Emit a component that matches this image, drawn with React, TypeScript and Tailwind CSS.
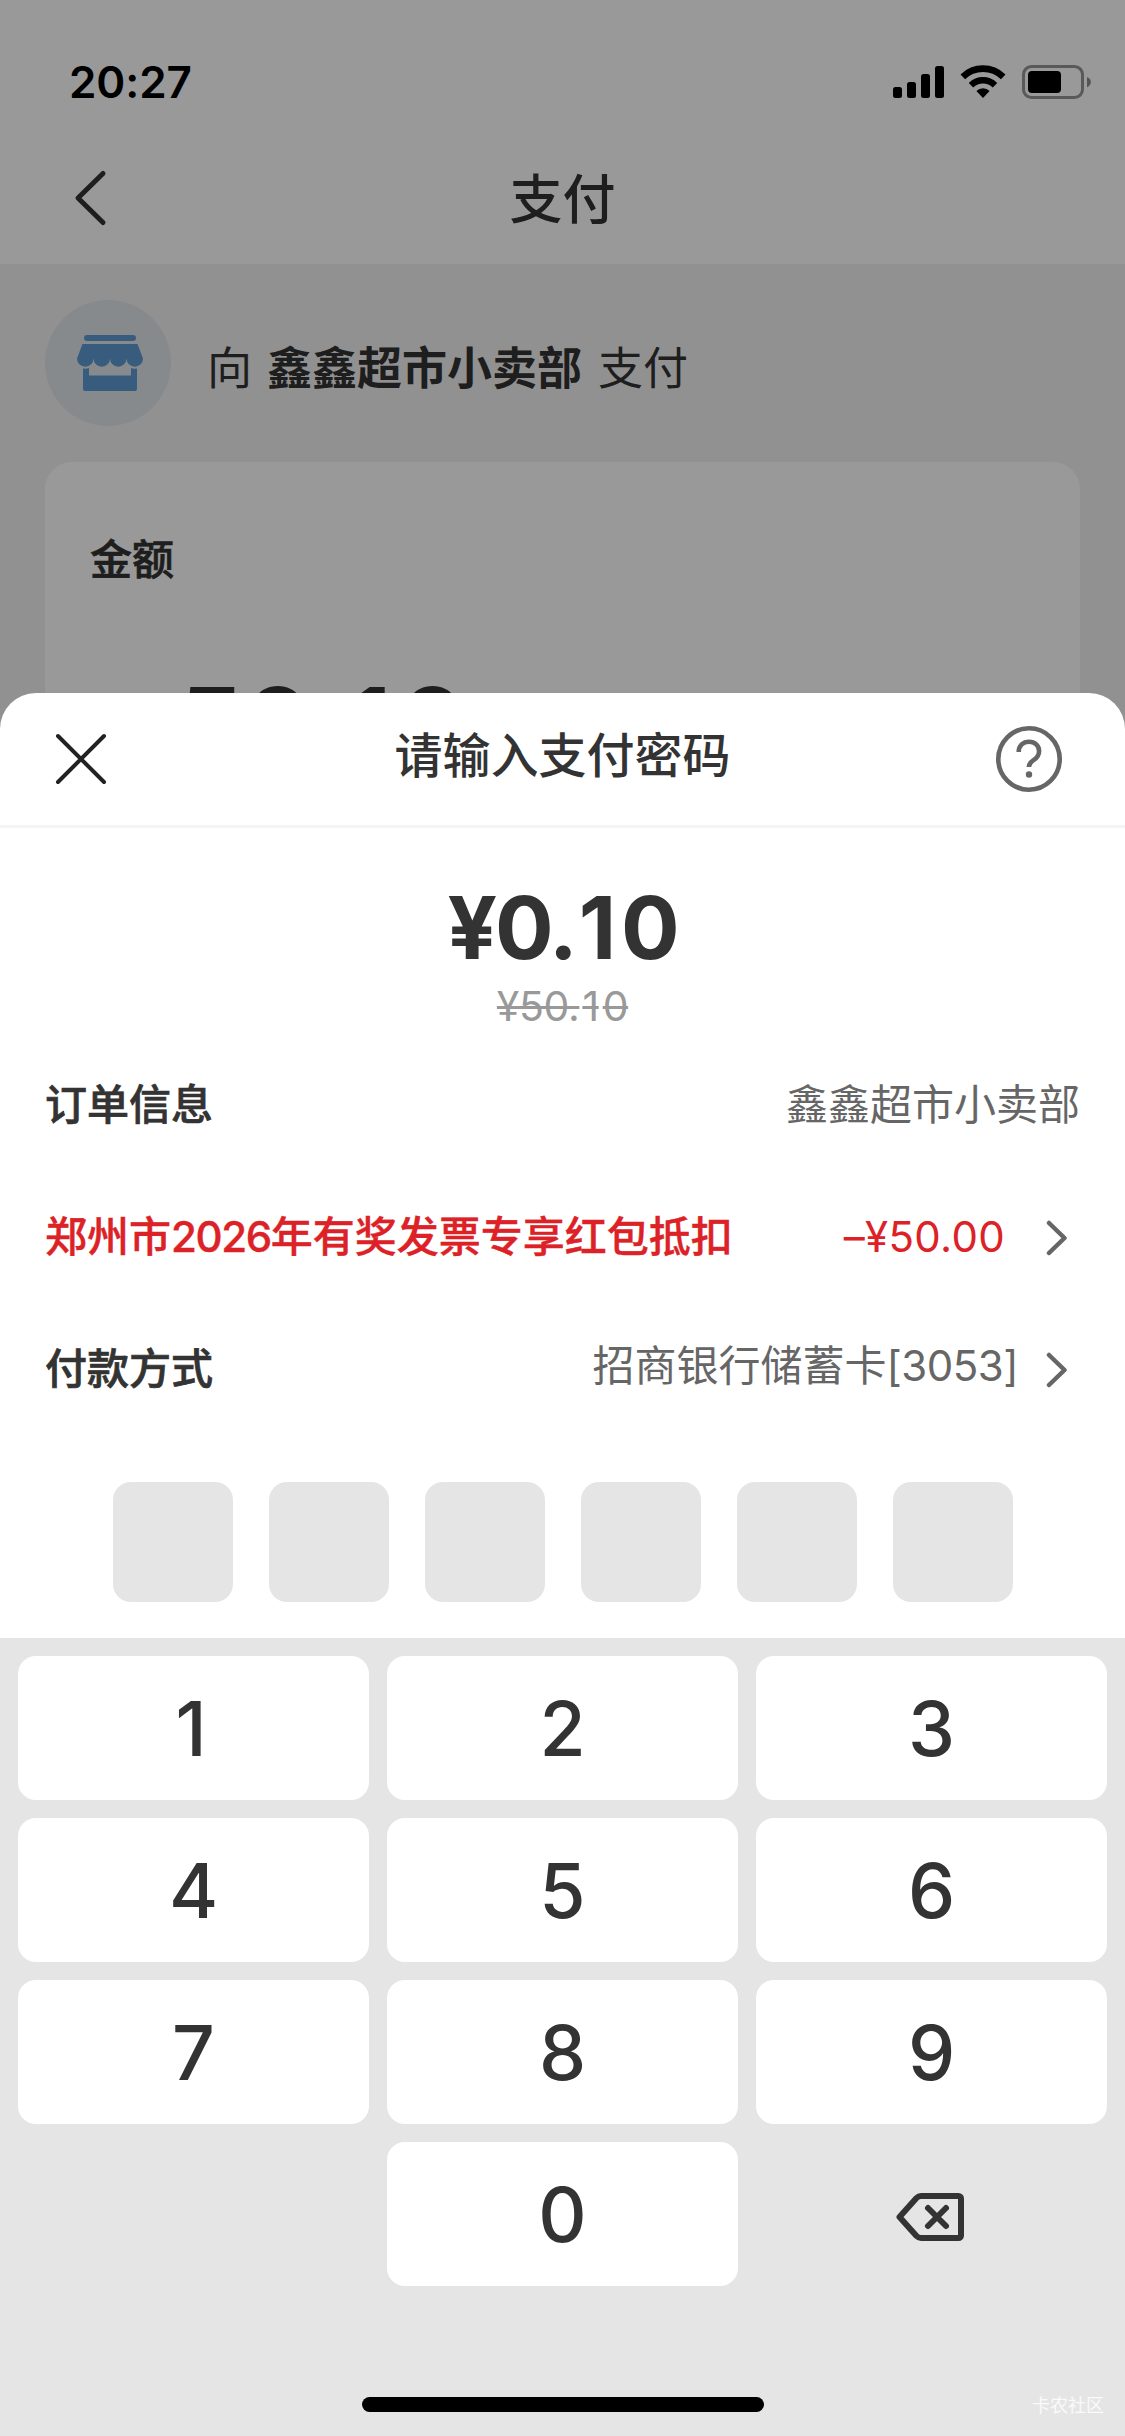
import { useState } from "react";

const KEYS = ["1", "2", "3", "4", "5", "6", "7", "8", "9"];
const PIN_LENGTH = 6;

function StatusBar() {
  return (
    <div className="flex h-[132px] items-start justify-between pt-[61px] pr-[33px] pl-[69px]">
      <span className="text-[44px] leading-[42px] font-semibold tracking-[-0.1px] text-black">20:27</span>
      <div className="flex pt-1 text-black">
        <svg width="51" height="34" viewBox="0 0 51 34" fill="currentColor">
          <rect x="0" y="22" width="9" height="11" rx="2.5" />
          <rect x="14" y="17" width="9" height="16" rx="2.5" />
          <rect x="28" y="9" width="9" height="24" rx="2.5" />
          <rect x="42" y="1" width="9" height="32" rx="2.5" />
        </svg>
        <svg className="ml-4" width="46" height="34" viewBox="0 0 46 34" fill="none" stroke="currentColor">
          <path d="M2.8 11.8a29 29 0 0 1 40.4 0" strokeWidth="6.6" />
          <path d="M11 20.2a17.2 17.2 0 0 1 24 0" strokeWidth="6.4" />
          <path d="M16.4 25.9a9.6 9.6 0 0 1 13.2 0L23 33z" fill="currentColor" stroke="none" />
        </svg>
        <svg className="ml-4" width="70" height="34" viewBox="0 0 70 34" fill="none">
          <rect x="1.5" y="1.5" width="59" height="31" rx="8" stroke="#000" strokeOpacity="0.42" strokeWidth="3" />
          <rect x="6" y="6" width="33" height="22" rx="4" fill="#000" />
          <path d="M65 12c5.200 1.800 5.200 8.400 0 10.200z" fill="#000" fillOpacity="0.45" />
        </svg>
      </div>
    </div>
  );
}

function ShopIcon() {
  return (
    <svg width="66" height="56" viewBox="0 0 66 56" fill="#5d99d2">
      <rect x="7" y="0" width="52" height="6" rx="3" />
      <path d="M5.500 9h55L66 23.500a8.250 8.250 0 0 1-16.500 0 8.250 8.250 0 0 1-16.500 0 8.250 8.250 0 0 1-16.500 0A8.250 8.250 0 0 1 0 23.500z" />
      <path d="M6 33.500c2.200.3 4.200.2 6-.5v7.500h42V33c1.800.7 3.800.8 6 .5V54a2 2 0 0 1-2 2H8a2 2 0 0 1-2-2z" />
    </svg>
  );
}

function ChevronRight() {
  return (
    <svg width="22" height="36" viewBox="0 0 22 36" fill="none" stroke="#666" strokeWidth="4.5" strokeLinecap="round" strokeLinejoin="round">
      <path d="M3 3l15.500 15L3 33" />
    </svg>
  );
}

function BackspaceIcon() {
  return (
    <svg width="68" height="48" viewBox="0 0 68 48" fill="none" stroke="#333" strokeWidth="6" strokeLinecap="round" strokeLinejoin="round">
      <path d="M25 3h37.500A2.500 2.500 0 0 1 65 5.500v37a2.500 2.500 0 0 1-2.500 2.500H25q-2.500 0-4.500-2L3.500 24l17-19q2-2 4.500-2z" />
      <path d="M32 15l18 18M50 15L32 33" />
    </svg>
  );
}

function PaymentPage() {
  return (
    <div>
      <div className="h-[264px] bg-white">
        <StatusBar />
        <div className="flex h-[132px] items-center px-[72px]">
          <svg width="36" height="60" viewBox="0 0 36 60" fill="none" stroke="#333" strokeWidth="5" strokeLinecap="round" strokeLinejoin="round">
            <path d="M31 5.500L6 30l25 24.500" />
          </svg>
          <h1 className="mt-1 flex-1 text-center text-[53px] leading-[60px] font-medium">支付</h1>
          <div className="w-9" />
        </div>
      </div>

      <div className="px-[45px] pt-9">
        <div className="flex h-[126px] items-center">
          <div className="flex size-[126px] items-center justify-center rounded-full bg-[#e1e6ea] pl-[3px]">
            <ShopIcon />
          </div>
          <div className="mt-[11px] ml-9 flex text-[45px] leading-[54px]">
            <span>向</span>
            <span className="ml-[15px] font-bold">鑫鑫超市小卖部</span>
            <span className="ml-4">支付</span>
          </div>
        </div>

        <div className="mt-9 h-[400px] rounded-[27px] bg-white px-[45px] pt-[74px]">
          <div className="text-[42px] leading-[48px] font-medium [-webkit-text-stroke:0.7px]">金额</div>
          <div className="mt-[81px] pl-[88px] text-[104px] leading-[120px] font-semibold">
            50.<span className="mx-[6px]">1</span>0
          </div>
        </div>
      </div>
    </div>
  );
}

export default function App() {
  const [pin, setPin] = useState("");

  function press(key: string) {
    if (pin.length < PIN_LENGTH) setPin(pin + key);
  }

  return (
    <div className="relative h-[2436px] w-[1125px] overflow-hidden bg-[#f2f2f2] font-['Inter','Noto_Sans_CJK_SC',sans-serif] text-[#333]">
      <PaymentPage />
      <div className="absolute inset-0 bg-black/40" />

      <div className="absolute inset-x-0 bottom-0 flex h-[1743px] flex-col rounded-t-[36px] bg-white">
        <div className="flex h-[135px] shrink-0 items-center border-b-[3px] border-[#f5f5f5] pr-[63px] pl-[54px]">
          <svg width="54" height="54" viewBox="0 0 54 54" fill="none" stroke="#222" strokeWidth="4" strokeLinecap="round">
            <path d="M4 4l46 46M50 4L4 50" />
          </svg>
          <h2 className="mb-[6px] flex-1 pl-[21px] text-center text-[48px] leading-[60px] font-medium">请输入支付密码</h2>
          <svg width="66" height="66" viewBox="0 0 66 66" fill="none" stroke="#666">
            <circle cx="33" cy="33" r="30.700" strokeWidth="4.600" />
            <path d="M22.700 26C22.700 19.600 27.200 15.700 33 15.700s10.100 4 10.100 9.500c0 4-2 6.600-5.600 9-3.200 2.100-4.700 3.400-4.700 6.800" strokeWidth="4.600" />
            <circle cx="33" cy="48.500" r="3.200" fill="#666" stroke="none" />
          </svg>
        </div>

        <div className="flex flex-col items-center pt-[50px]">
          <div className="text-[87px] leading-[100px] font-bold tracking-[-2.2px]">
            ¥0.<span className="mr-[7px] ml-[3px]">1</span>0
          </div>
          <div className="mt-[3px] text-[41px] leading-[50px] tracking-[-0.4px] text-[#999] line-through decoration-[3px]">
            ¥50.<span className="mr-1 ml-[3px]">1</span>0
          </div>
        </div>

        <div className="flex flex-col px-[45px] pt-[30px] text-[42px] leading-[60px]">
          <div className="flex h-[132px] items-start justify-between pt-[14px]">
            <span className="font-medium [-webkit-text-stroke:0.7px]">订单信息</span>
            <span className="text-[#666]">鑫鑫超市小卖部</span>
          </div>
          <div className="flex h-[132px] items-start justify-between pt-[14px] text-[#dc2227]">
            <span className="font-medium [-webkit-text-stroke:0.4px]">
              郑州市<span className="tracking-[-1.400px]">2026</span>年有奖发票专享红包抵扣
            </span>
            <div className="flex items-center">
              <span className="tracking-[0.3px]">–¥50.00</span>
              <div className="mt-[2px] mr-3 ml-[41px]"><ChevronRight /></div>
            </div>
          </div>
          <div className="flex items-start justify-between pt-[14px]">
            <span className="font-medium [-webkit-text-stroke:0.7px]">付款方式</span>
            <div className="flex items-center text-[#666]">
              <span className="-mt-[3px]">
                招商银行储蓄卡<span className="tracking-[-0.5px]">[3053]</span>
              </span>
              <div className="mt-[5px] mr-3 ml-7"><ChevronRight /></div>
            </div>
          </div>
        </div>

        <div className="mt-auto flex h-[156px] shrink-0 justify-center gap-9">
          {Array.from({ length: PIN_LENGTH }, (_, i) => (
            <div key={i} className="flex size-[120px] items-center justify-center rounded-[18px] bg-[#e5e5e5]">
              {i < pin.length && <span className="size-6 rounded-full bg-[#333]" />}
            </div>
          ))}
        </div>

        <div className="flex h-[798px] shrink-0 flex-col bg-[#e5e5e5] px-[18px] pt-[18px]">
          <div className="grid grid-cols-3 gap-[18px] text-[75px] leading-none font-medium">
            {KEYS.map((key) => (
              <button key={key} onClick={() => press(key)} className="h-36 rounded-[18px] bg-white first:pr-[5px]">
                {key}
              </button>
            ))}
            <button onClick={() => press("0")} className="col-start-2 h-36 rounded-[18px] bg-white">
              0
            </button>
            <button onClick={() => setPin(pin.slice(0, -1))} className="flex h-36 items-center justify-center pt-[6px] pr-[3px]">
              <BackspaceIcon />
            </button>
          </div>
          <div className="mx-auto mt-[111px] h-[15px] w-[402px] rounded-full bg-black" />
        </div>

        <span className="absolute right-[21px] bottom-[18px] text-[18px] leading-6 text-white/80">卡农社区</span>
      </div>
    </div>
  );
}
